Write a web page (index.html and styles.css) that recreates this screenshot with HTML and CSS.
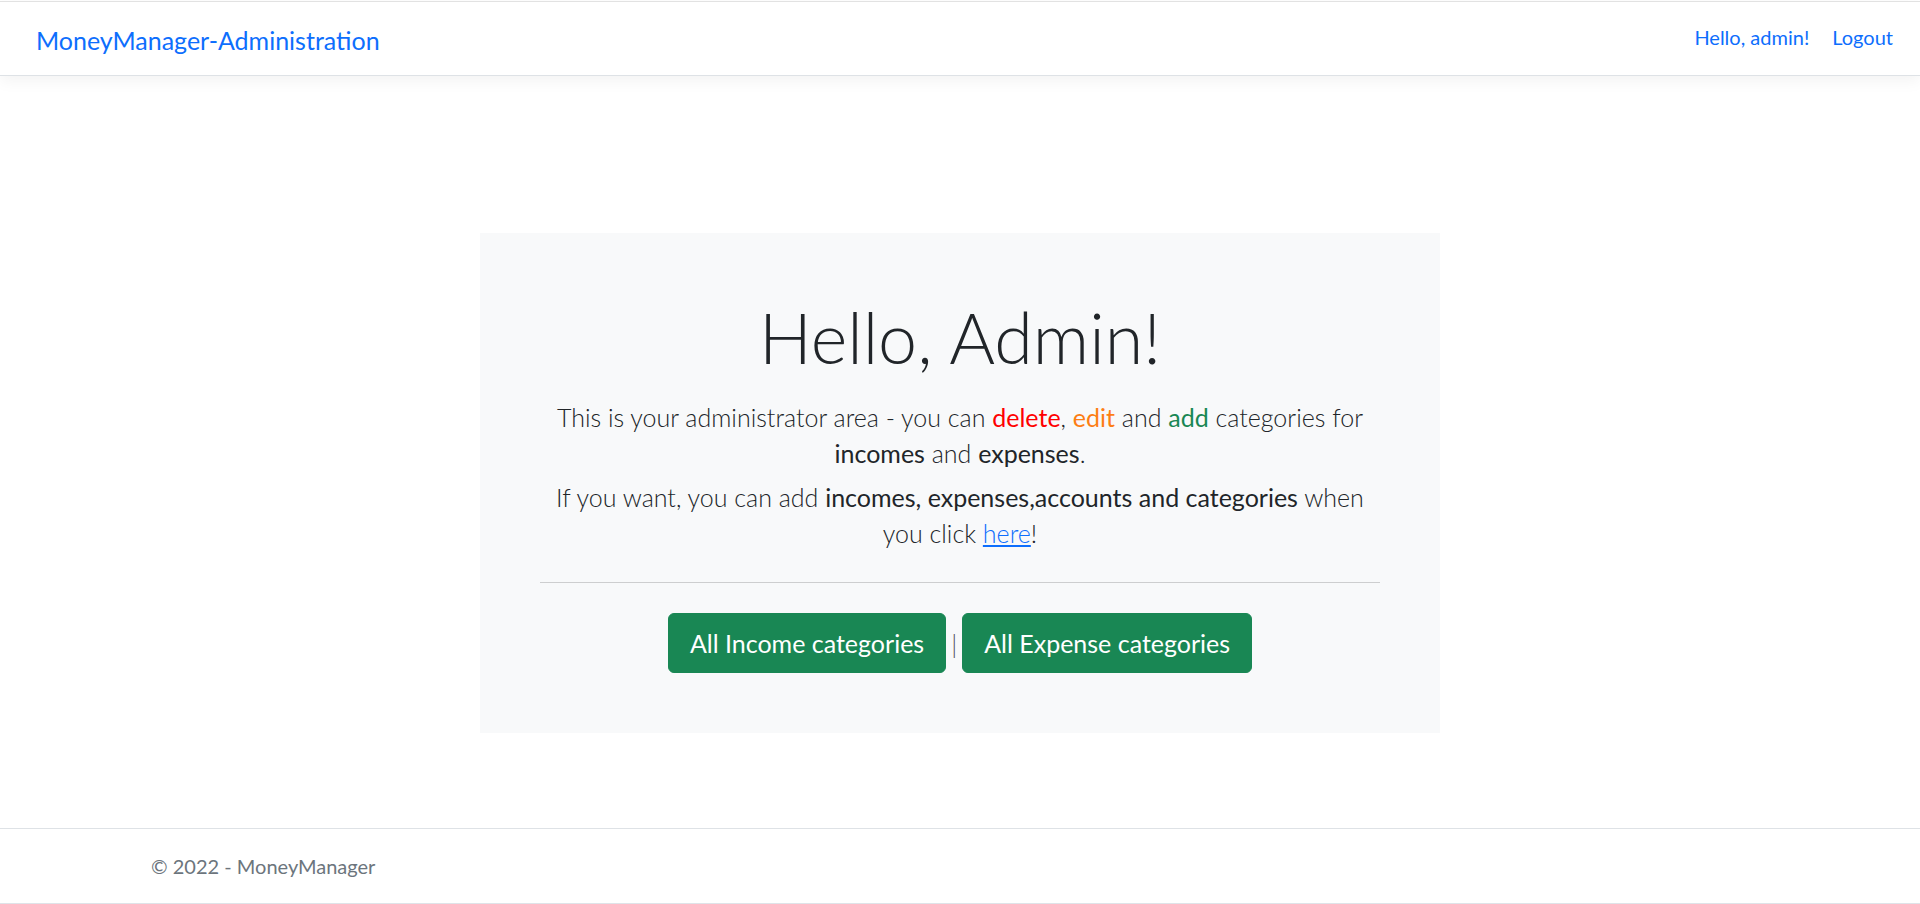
FILE: index.html
```html
<!DOCTYPE html>
<html lang="en">
<head>
<meta charset="utf-8">
<title>MoneyManager-Administration</title>
<link rel="stylesheet" href="styles.css">
</head>
<body>
<div class="page">
  <header class="navbar">
    <a class="brand" href="#">MoneyManager-Administration</a>
    <nav class="nav">
      <a class="nav-link" href="#">Hello, admin!</a>
      <a class="nav-link" href="#">Logout</a>
    </nav>
  </header>
  <main class="main">
    <section class="jumbotron">
      <h1 class="display">Hello, Admin!</h1>
      <p class="lead">This is your administrator area - you can <span class="c-delete">delete</span>, <span class="c-edit">edit</span> and <span class="c-add">add</span> categories for <strong>incomes</strong> and <strong>expenses</strong>.</p>
      <p class="lead">If you want, you can add <strong>incomes, expenses,accounts and categories</strong> when you click <a class="link" href="#">here</a>!</p>
      <hr class="divider">
      <div class="actions">
        <a class="btn" href="#">All Income categories</a>
        <span class="sep">|</span>
        <a class="btn" href="#">All Expense categories</a>
      </div>
    </section>
  </main>
  <footer class="footer">
    <div class="footer-inner">&copy; 2022 - MoneyManager</div>
  </footer>
</div>
</body>
</html>
```

FILE: styles.css
```css
html, body {
  margin: 0;
  padding: 0;
  background: #fff;
}
body {
  font-family: "Lato", "Open Sans", sans-serif;
  color: #212529;
  font-size: 20px;
}
.page {
  height: 904px;
  display: flex;
  flex-direction: column;
  overflow: hidden;
}
.navbar {
  margin-top: 1px;
  border-top: 1px solid #e2e2e2;
  border-bottom: 1px solid #dee2e6;
  box-shadow: 0 5px 15px rgba(0,0,0,0.05);
  height: 73px;
  display: flex;
  align-items: center;
  justify-content: space-between;
  padding: 0 27px 0 36px;
  background: #fff;
  position: relative;
  z-index: 1;
}
.brand {
  font-size: 25px;
  color: #0d6efd;
  text-decoration: none;
  padding-top: 2px;
}
.nav {
  display: flex;
  gap: 23px;
}
.nav-link {
  font-size: 20px;
  color: #0d6efd;
  text-decoration: none;
  padding-bottom: 4px;
}
.main {
  flex: 1;
  display: flex;
  justify-content: center;
  align-items: flex-start;
}
.jumbotron {
  margin-top: 157px;
  width: 960px;
  box-sizing: border-box;
  background: #f8f9fa;
  padding: 62px 60px 60px;
  text-align: center;
}
.display {
  font-size: 70px;
  font-weight: 300;
  line-height: 1.2;
  margin: 0 0 20px;
}
.lead {
  font-size: 25px;
  font-weight: 300;
  line-height: 36px;
  margin: 0 0 8px;
}
.lead strong {
  font-weight: 400;
}
.c-delete { color: #ff0000; font-weight: 400; }
.c-edit { color: #fd7e14; font-weight: 400; }
.c-add { color: #198754; font-weight: 400; }
.link {
  color: #0d6efd;
  text-decoration: underline;
}
.divider {
  margin: 31px 0 30px;
  border: 0;
  border-top: 1px solid #cdcecf;
  height: 0;
}
.actions {
  display: flex;
  justify-content: center;
  align-items: center;
}
.sep {
  width: 16px;
  text-align: center;
  font-size: 25px;
  font-weight: 300;
  color: #495057;
}
.btn {
  display: inline-block;
  background: #198754;
  border: 1px solid #198754;
  border-radius: 6px;
  color: #fff;
  text-decoration: none;
  font-size: 25px;
  line-height: 36px;
  padding: 11px 21px;
}
.footer {
  border-top: 1px solid #dee2e6;
  border-bottom: 1px solid #dfe3e8;
  height: 74px;
  box-sizing: content-box;
}
.footer-inner {
  padding-left: 151px;
  line-height: 74px;
  font-size: 20px;
  color: #6c757d;
}
```
